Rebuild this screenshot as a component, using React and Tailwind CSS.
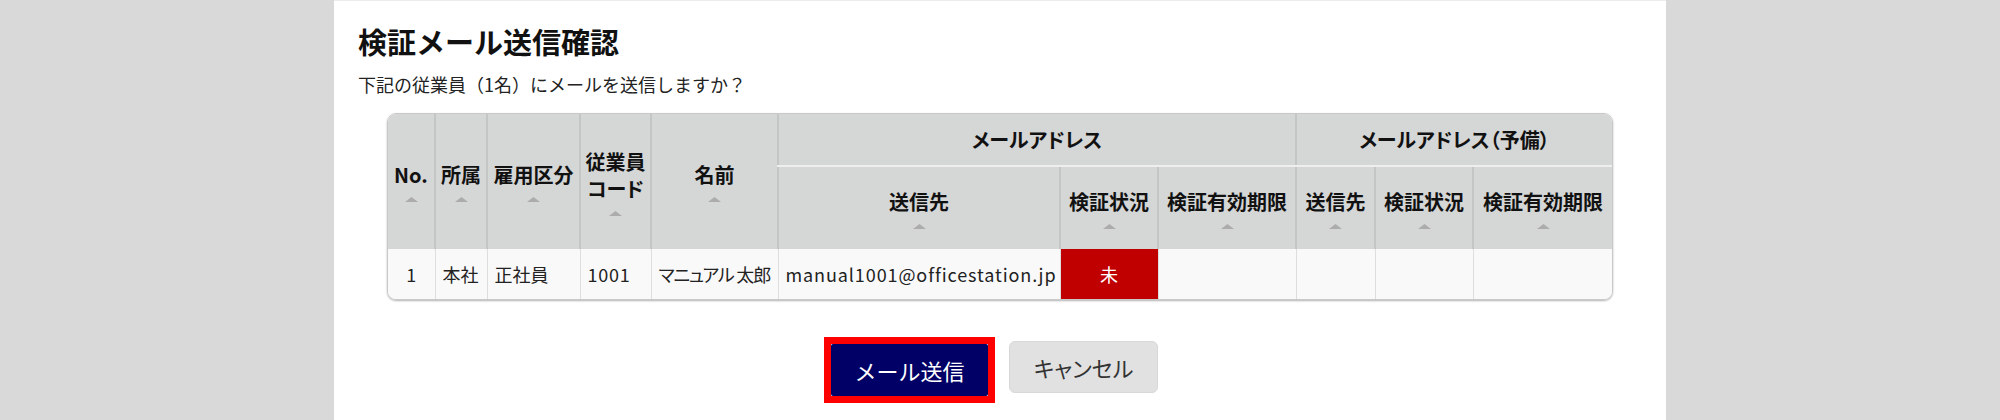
const cols = [47, 52, 93, 71, 127, 282, 98, 138, 79, 98, 139];

function SortArrow() {
  return (
    <svg width="13" height="5" viewBox="0 0 13 5" className="mx-auto mt-[9px] block">
      <polygon points="0,5 6.5,0 13,5" fill="#acacac" />
    </svg>
  );
}

function Th({ children, rowSpan, colSpan, first, arrow = true }) {
  return (
    <th
      rowSpan={rowSpan}
      colSpan={colSpan}
      className={
        "px-1 text-center align-middle text-[20px] font-bold leading-[27px] text-[#111] " +
        (first ? "" : "border-l-2 border-[#c4c5c5]")
      }
    >
      {children}
      {arrow && <SortArrow />}
    </th>
  );
}

function Td({ children, center, first, className = "" }) {
  return (
    <td
      className={
        "px-[7px] align-middle text-[18px] leading-[24px] text-[#222] " +
        (center ? "text-center " : "text-left ") +
        (first ? "" : "border-l border-[#dedede] ") +
        className
      }
    >
      {children}
    </td>
  );
}

export default function App() {
  return (
    <div className="min-h-[420px] bg-[#d9d9d9] font-['Noto_Sans_CJK_JP',sans-serif]">
      <div className="mx-auto h-[420px] w-[1332px] border-t border-[#ececec] bg-white pt-[19px]">
        <div className="px-6">
          <h1 className="text-[29px] font-bold leading-[42px] text-[#111]">検証メール送信確認</h1>
          <p className="mt-[9px] text-[18px] leading-[27px] text-[#222]">
            下記の従業員（1名）にメールを送信しますか？
          </p>
        </div>

        <div className="mx-auto mt-[15px] w-[1226px] overflow-hidden rounded-[9px] border border-[#c9c9c9] shadow-[0_1px_2px_rgba(0,0,0,0.3)] [font-feature-settings:'palt']">
          <table className="w-full table-fixed border-collapse">
            <colgroup>
              {cols.map((w, i) => (
                <col key={i} style={{ width: w }} />
              ))}
            </colgroup>
            <thead className="bg-[#d5d6d6]">
              <tr className="h-[52px]">
                <Th rowSpan={2} first>No.</Th>
                <Th rowSpan={2}>所属</Th>
                <Th rowSpan={2}>雇用区分</Th>
                <Th rowSpan={2}>
                  従業員
                  <br />
                  コード
                </Th>
                <Th rowSpan={2}>名前</Th>
                <th colSpan={3} className="border-b-2 border-l-2 border-b-[#eeeeee] border-l-[#c4c5c5] text-center text-[20px] font-bold text-[#111]">
                  メールアドレス
                </th>
                <th colSpan={3} className="border-b-2 border-l-2 border-b-[#eeeeee] border-l-[#c4c5c5] text-center text-[20px] font-bold text-[#111]">
                  メールアドレス（予備）
                </th>
              </tr>
              <tr className="h-[83px]">
                <Th>送信先</Th>
                <Th>検証状況</Th>
                <Th>検証有効期限</Th>
                <Th>送信先</Th>
                <Th>検証状況</Th>
                <Th>検証有効期限</Th>
              </tr>
            </thead>
            <tbody className="bg-[#f9f9f9]">
              <tr className="h-[50px]">
                <Td center first>1</Td>
                <Td>本社</Td>
                <Td>正社員</Td>
                <Td className="tracking-[0.8px]">1001</Td>
                <Td className="whitespace-nowrap tracking-[-1.2px]">マニュアル 太郎</Td>
                <Td className="whitespace-nowrap tracking-[0.9px]">manual1001@officestation.jp</Td>
                <Td center className="bg-[#c00000] text-white">未</Td>
                <Td />
                <Td />
                <Td />
                <Td />
              </tr>
            </tbody>
          </table>
        </div>

        <div className="mt-[37px] flex items-center justify-center gap-[14px] pr-[18px]">
          <div className="border-[7px] border-[#ff0000] bg-white">
            <button className="flex h-[52px] w-[157px] items-center justify-center rounded-[2px] bg-[#000066] text-[22px] text-white">
              メール送信
            </button>
          </div>
          <button className="mb-[6px] flex h-[52px] w-[149px] items-center justify-center rounded-[6px] border border-[#d8d8d8] bg-[#e1e1e1] text-[22px] text-[#333] [font-feature-settings:'palt']">
            キャンセル
          </button>
        </div>
      </div>
    </div>
  );
}
